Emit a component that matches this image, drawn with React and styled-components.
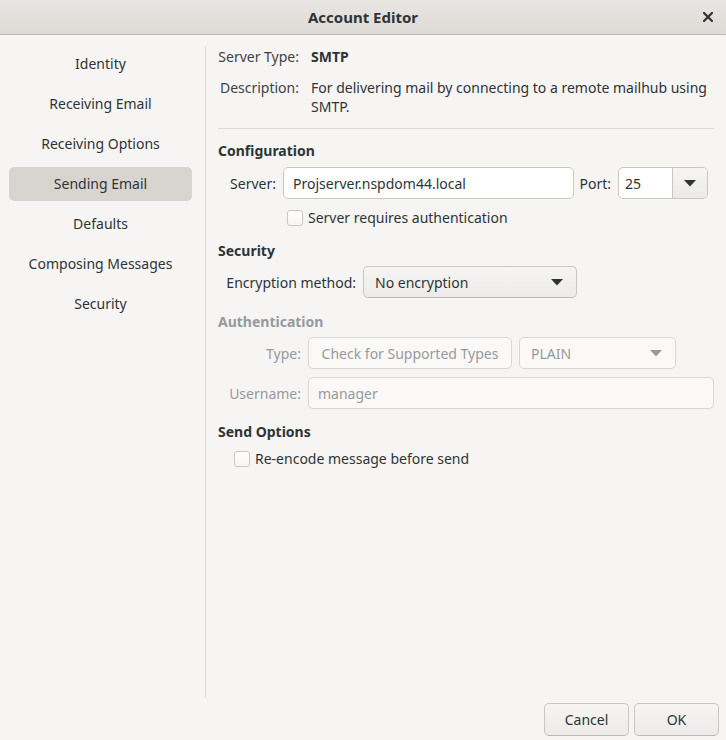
import styled, { createGlobalStyle } from "styled-components";

const GlobalStyle = createGlobalStyle`
	html, body {
		margin: 0;
		padding: 0;
		background: #f6f5f4;
	}
	* {
		box-sizing: border-box;
	}
`;

const Window = styled.div`
	width: 726px;
	height: 740px;
	display: flex;
	flex-direction: column;
	background: #f6f5f4;
	color: #2e3436;
	font-family: "Noto Sans", "Open Sans", sans-serif;
	font-size: 14px;
	overflow: hidden;
`;

const HeaderBar = styled.div`
	height: 35px;
	flex-shrink: 0;
	display: flex;
	align-items: center;
	justify-content: center;
	position: relative;
	background: linear-gradient(#e8e6e3, #dedad6);
	border-bottom: 1px solid #bfb8b1;
`;

const Title = styled.div`
	font-weight: bold;
	font-size: 15px;
`;

const CloseButton = styled.div`
	position: absolute;
	right: 11px;
	top: 10px;
	width: 14px;
	height: 14px;
	display: flex;
	align-items: center;
	justify-content: center;
`;

const Main = styled.div`
	flex: 1;
	display: flex;
	padding-top: 11px;
	min-height: 0;
`;

const Sidebar = styled.div`
	width: 206px;
	flex-shrink: 0;
	border-right: 1px solid #dcd8d4;
	margin-top: 1px;
	padding: 0 13px 0 9px;
	display: flex;
	flex-direction: column;
	gap: 6px;
`;

const SideItem = styled.div`
	height: 34px;
	display: flex;
	align-items: center;
	justify-content: center;
	border-radius: 5px;
	padding-bottom: 2px;
	background: ${(p) => (p.$active ? "#d8d4d0" : "transparent")};
`;

const Content = styled.div`
	flex: 1;
	padding: 0 12px 0 12px;
	display: flex;
	flex-direction: column;
`;

const InfoGrid = styled.div`
	display: grid;
	grid-template-columns: 81px 1fr;
	column-gap: 12px;
	row-gap: 12px;
	line-height: 19px;
	padding-top: 1px;
	padding-bottom: 12px;
	border-bottom: 1px solid #dcd8d4;
`;

const InfoLabel = styled.div`
	text-align: right;
	color: #3d4345;
`;

const InfoValue = styled.div`
	font-weight: ${(p) => (p.$bold ? "bold" : "normal")};
`;

const Heading = styled.div`
	font-weight: bold;
	line-height: 20px;
	margin-top: ${(p) => p.$top || 12}px;
	color: ${(p) => (p.$disabled ? "#959a9c" : "#2e3436")};
`;

const Row = styled.div`
	display: flex;
	align-items: center;
	gap: 7px;
	margin-top: ${(p) => p.$top || 7}px;
	padding-left: 12px;
	padding-right: ${(p) => p.$right || 0}px;
`;

const Label = styled.div`
	width: ${(p) => (p.$width ? `${p.$width}px` : "auto")};
	text-align: right;
	white-space: nowrap;
	flex-shrink: 0;
	display: flex;
	justify-content: flex-end;
	color: ${(p) => (p.$disabled ? "#959a9c" : "#2e3436")};
`;

const Entry = styled.div`
	height: 32px;
	width: ${(p) => (p.$width ? `${p.$width}px` : "auto")};
	flex: ${(p) => (p.$grow ? 1 : "none")};
	display: flex;
	align-items: center;
	padding: 0 9px;
	border: 1px solid ${(p) => (p.$disabled ? "#dcd7d3" : "#cdc7c2")};
	border-radius: 5px;
	background: ${(p) => (p.$disabled ? "#faf9f8" : "#ffffff")};
	color: ${(p) => (p.$disabled ? "#959a9c" : "#2e3436")};
`;

const ComboEntry = styled.div`
	height: 32px;
	width: 90px;
	flex-shrink: 0;
	display: flex;
	border: 1px solid #cdc7c2;
	border-radius: 5px;
	background: #ffffff;
	overflow: hidden;
`;

const ComboText = styled.div`
	flex: 1;
	display: flex;
	align-items: center;
	padding-left: 6px;
`;

const ComboArrowButton = styled.div`
	width: 35px;
	display: flex;
	align-items: center;
	justify-content: center;
	border-left: 1px solid #cdc7c2;
	background: linear-gradient(#f6f5f4, #edebe9);
`;

const Combo = styled.div`
	height: 32px;
	width: ${(p) => p.$width}px;
	flex-shrink: 0;
	display: flex;
	align-items: center;
	justify-content: space-between;
	padding: 0 13px 0 11px;
	border: 1px solid ${(p) => (p.$disabled ? "#dcd7d3" : "#cdc7c2")};
	border-bottom-color: ${(p) => (p.$disabled ? "#dcd7d3" : "#bfb8b1")};
	border-radius: 5px;
	background: ${(p) =>
		p.$disabled ? "#faf9f8" : "linear-gradient(#f6f5f4, #edebe9)"};
	color: ${(p) => (p.$disabled ? "#959a9c" : "#2e3436")};
`;

const Button = styled.div`
	height: ${(p) => p.$height || 32}px;
	width: ${(p) => (p.$width ? `${p.$width}px` : "auto")};
	flex-shrink: 0;
	display: flex;
	align-items: center;
	justify-content: center;
	border: 1px solid ${(p) => (p.$disabled ? "#dcd7d3" : "#cdc7c2")};
	border-bottom-color: ${(p) => (p.$disabled ? "#dcd7d3" : "#bfb8b1")};
	border-radius: 5px;
	background: ${(p) =>
		p.$disabled ? "#faf9f8" : "linear-gradient(#f6f5f4, #edebe9)"};
	color: ${(p) => (p.$disabled ? "#959a9c" : "#2e3436")};
`;

const CheckRow = styled.label`
	display: flex;
	align-items: center;
	gap: 5px;
	margin-top: ${(p) => p.$top || 6}px;
	padding-left: ${(p) => p.$indent}px;
	line-height: 20px;
`;

const CheckBox = styled.span`
	width: 16px;
	height: 16px;
	border: 1px solid #cdc7c2;
	border-radius: 3px;
	background: linear-gradient(#ffffff, #f6f5f4);
	flex-shrink: 0;
`;

const ActionBar = styled.div`
	height: 43px;
	flex-shrink: 0;
	display: flex;
	justify-content: flex-end;
	align-items: flex-start;
	gap: 5px;
	padding: 6px 7px 0 0;
`;

const Arrow = ({ color = "#2e3436" }) => (
	<svg width="12" height="7" viewBox="0 0 12 7">
		<path d="M0 0 L12 0 L6 6.5 Z" fill={color} />
	</svg>
);

const sections = [
	"Identity",
	"Receiving Email",
	"Receiving Options",
	"Sending Email",
	"Defaults",
	"Composing Messages",
	"Security",
];

export default function App() {
	return (
		<>
			<GlobalStyle />
			<Window>
				<HeaderBar>
					<Title>Account Editor</Title>
					<CloseButton>
						<svg width="10" height="10" viewBox="0 0 10 10">
							<path
								d="M1 1 L9 9 M9 1 L1 9"
								stroke="#2e3436"
								strokeWidth="2.2"
								strokeLinecap="square"
							/>
						</svg>
					</CloseButton>
				</HeaderBar>
				<Main>
					<Sidebar>
						{sections.map((s) => (
							<SideItem key={s} $active={s === "Sending Email"}>
								{s}
							</SideItem>
						))}
					</Sidebar>
					<Content>
						<InfoGrid>
							<InfoLabel>Server Type:</InfoLabel>
							<InfoValue $bold>SMTP</InfoValue>
							<InfoLabel>Description:</InfoLabel>
							<InfoValue>
								For delivering mail by connecting to a remote mailhub using
								SMTP.
							</InfoValue>
						</InfoGrid>

						<Heading $top={12}>Configuration</Heading>
						<Row $top={6} $right={6}>
							<Label $width={46}>Server:</Label>
							<Entry $grow>Projserver.nspdom44.local</Entry>
							<Label $width={30}>Port:</Label>
							<ComboEntry>
								<ComboText>25</ComboText>
								<ComboArrowButton>
									<Arrow />
								</ComboArrowButton>
							</ComboEntry>
						</Row>
						<CheckRow $indent={69} $top={9}>
							<CheckBox />
							Server requires authentication
						</CheckRow>

						<Heading $top={13}>Security</Heading>
						<Row $top={5}>
							<Label $width={126}>Encryption method:</Label>
							<Combo $width={214}>
								No encryption
								<Arrow />
							</Combo>
						</Row>

						<Heading $top={14} $disabled>
							Authentication
						</Heading>
						<Row $top={5}>
							<Label $width={71} $disabled>
								Type:
							</Label>
							<Button $width={204} $disabled>
								Check for Supported Types
							</Button>
							<Combo $width={157} $disabled>
								PLAIN
								<Arrow color="#959a9c" />
							</Combo>
						</Row>
						<Row $top={8}>
							<Label $width={71} $disabled>
								Username:
							</Label>
							<Entry $grow $disabled>
								manager
							</Entry>
						</Row>

						<Heading $top={13}>Send Options</Heading>
						<CheckRow $indent={16} $top={7}>
							<CheckBox />
							Re-encode message before send
						</CheckRow>
					</Content>
				</Main>
				<ActionBar>
					<Button $width={85} $height={33}>
						Cancel
					</Button>
					<Button $width={85} $height={33}>
						OK
					</Button>
				</ActionBar>
			</Window>
		</>
	);
}
